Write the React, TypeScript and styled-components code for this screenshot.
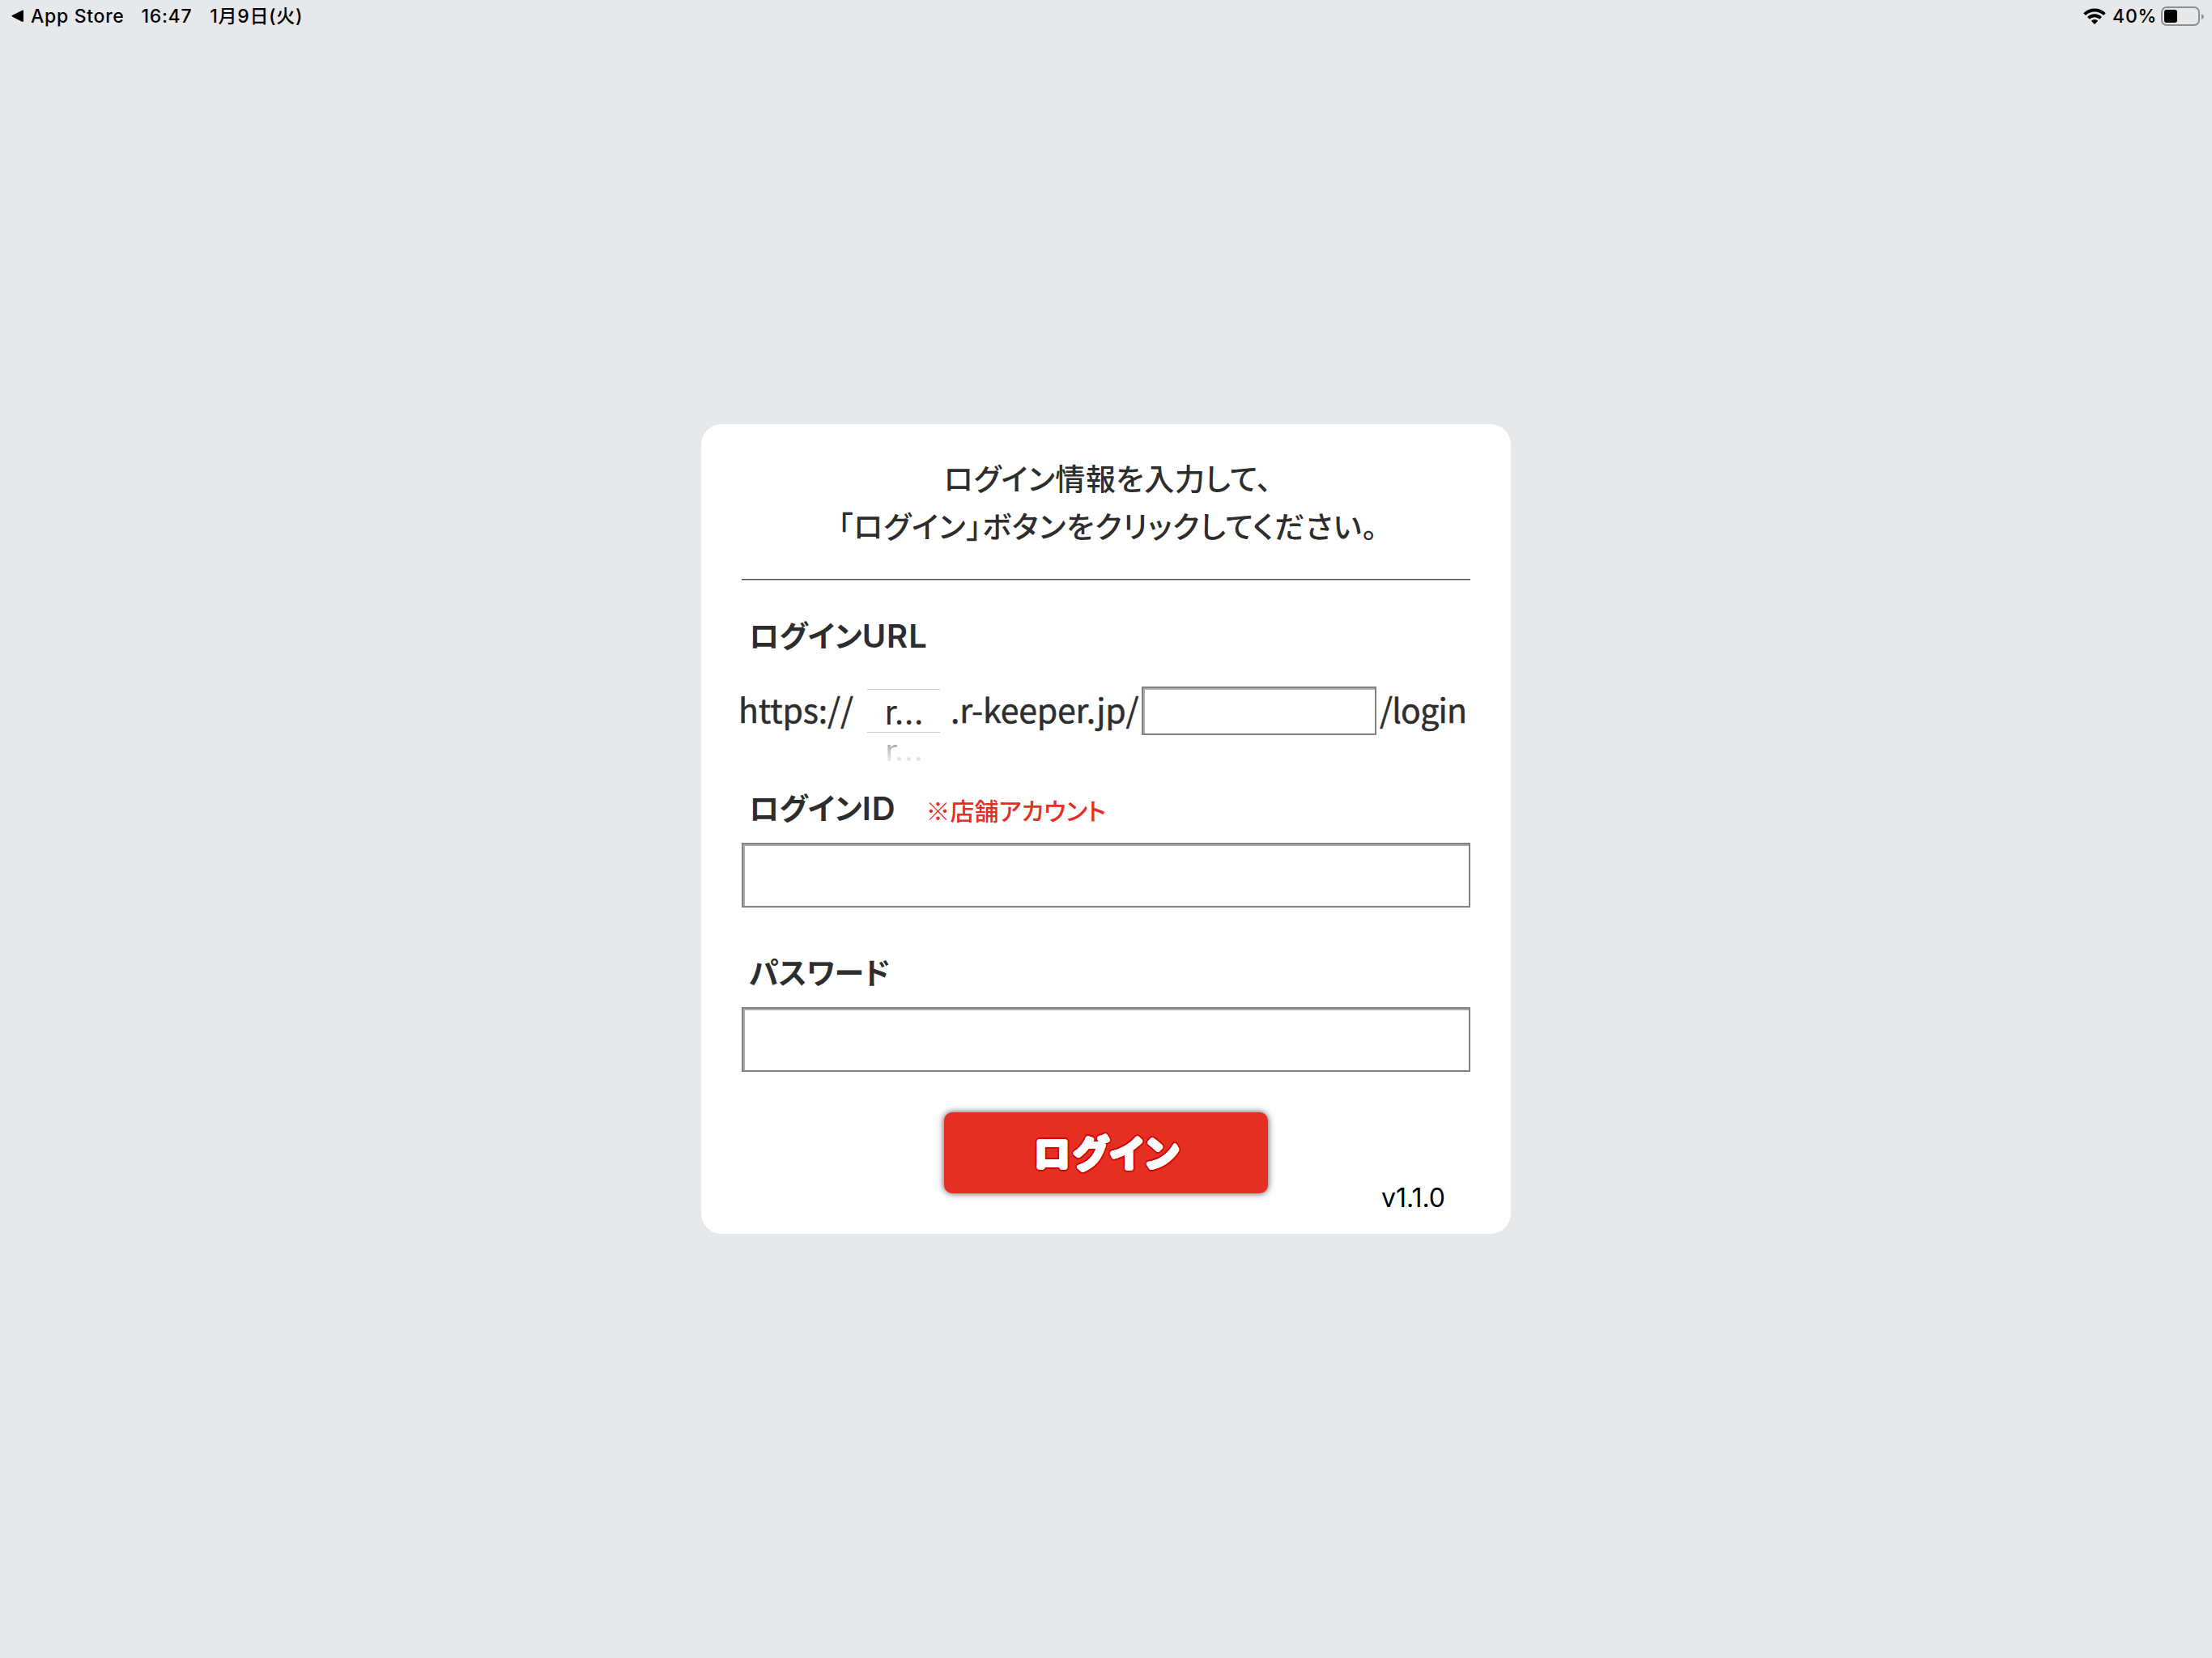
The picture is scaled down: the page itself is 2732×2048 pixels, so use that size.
import styled, { createGlobalStyle } from 'styled-components'
import React from 'react'

// 文字の縁取り(円状にシャドウを並べる)
const ring = (radius: number, color: string, steps = 16) =>
  Array.from({ length: steps }, (_, i) => {
    const angle = (Math.PI * 2 * i) / steps
    return `${(Math.cos(angle) * radius).toFixed(2)}px ${(Math.sin(angle) * radius).toFixed(2)}px ${color}`
  }).join(', ')

const GlobalStyle = createGlobalStyle`
  * {
    box-sizing: border-box;
  }

  body {
    margin: 0;
    background: #e7e8ea;
  }
`

const App: React.FC = () => {
  return (
    <Screen>
      <GlobalStyle />
      <StatusBar>
        <StatusGroup>
          <BackArrow viewBox='0 0 15 16'>
            <path d='M13.6 0.7 L1 7 Q0 7.8 1 8.6 L13.6 15 Q15 15.4 15 14 V1.7 Q15 0.3 13.6 0.7 Z' />
          </BackArrow>
          <StatusText $left={9}>App Store</StatusText>
          <StatusText $left={21}>16:47</StatusText>
          <StatusText $left={22}>1月9日(火)</StatusText>
        </StatusGroup>
        <StatusGroup>
          <WifiIcon viewBox='0 0 28 20'>
            <path d='M1.6 7.6 A17.5 17.5 0 0 1 26.4 7.6' />
            <path d='M6.4 12.4 A10.8 10.8 0 0 1 21.6 12.4' />
            <path className='dot' d='M14 20 L9.8 15.8 A6 6 0 0 1 18.2 15.8 Z' />
          </WifiIcon>
          <StatusText $left={8}>40%</StatusText>
          <Battery>
            <BatteryLevel />
          </Battery>
          <BatteryCap viewBox='0 0 4 9'>
            <path d='M0 0 Q4 1.5 4 4.5 Q4 7.5 0 9 Z' />
          </BatteryCap>
        </StatusGroup>
      </StatusBar>

      <Card>
        <Heading>
          <HeadingLine $spacing={0.6}>ログイン情報を入力して、</HeadingLine>
          <HeadingLine $spacing={1.05}>「ログイン」ボタンをクリックしてください。</HeadingLine>
        </Heading>
        <Divider />

        <Label $top={45}>
          ログイン<Latin>URL</Latin>
        </Label>
        <UrlRow>
          <UrlText $width={159} $spacing={-0.15}>
            https://
          </UrlText>
          <Picker>
            <PickerItem>r…</PickerItem>
            <PickerNext>r…</PickerNext>
          </Picker>
          <UrlText $width={249} $left={13} $spacing={-0.15}>
            .r-keeper.jp/
          </UrlText>
          <UrlInput type='text' />
          <UrlText $width={116} $left={4} $spacing={-0.8}>
            /login
          </UrlText>
        </UrlRow>

        <Label $top={67}>
          ログイン<Latin>ID</Latin>
          <Notice>※店舗アカウント</Notice>
        </Label>
        <Input type='text' />

        <Label $top={57}>パスワード</Label>
        <Input type='password' />

        <LoginButton type='button'>ログイン</LoginButton>
        <Version>v1.1.0</Version>
      </Card>
    </Screen>
  )
}

const Screen = styled.div`
  height: 2048px;
  display: flex;
  flex-direction: column;
  background: #e7e8ea;
  font-family: 'Noto Sans CJK JP', sans-serif;
`

const StatusBar = styled.header`
  display: flex;
  justify-content: space-between;
  height: 40px;
  padding: 0 10px 0 14px;
`

const StatusGroup = styled.div`
  display: flex;
  align-items: center;
  height: 40px;
`

const StatusText = styled.span<{ $left: number }>`
  margin-left: ${({ $left }) => $left}px;
  font-family: Inter, 'Noto Sans CJK JP', sans-serif;
  font-size: 23px;
  font-weight: 500;
  line-height: 40px;
  letter-spacing: 0.7px;
  color: #000;
  white-space: nowrap;
`

const BackArrow = styled.svg`
  width: 15px;
  height: 16px;
`

const WifiIcon = styled.svg`
  width: 28px;
  height: 20px;

  path {
    fill: none;
    stroke: #000;
    stroke-width: 4;
  }

  .dot {
    fill: #000;
    stroke: none;
  }
`

const Battery = styled.div`
  width: 48px;
  height: 24px;
  margin-left: 5px;
  padding: 2px;
  border: 2px solid #8e8f90;
  border-radius: 7px;
`

const BatteryLevel = styled.div`
  width: 16px;
  height: 16px;
  border-radius: 3px;
  background: #000;
`

const BatteryCap = styled.svg`
  width: 3px;
  height: 9px;
  margin-left: 2px;
  fill: #8e8f90;
`

const Card = styled.main`
  display: flex;
  flex-direction: column;
  width: 1000px;
  height: 1000px;
  margin: 484px auto 0;
  padding: 37px 50px 0;
  border-radius: 25px;
  background: #fff;
  color: #2d2d2d;
`

const Heading = styled.h1`
  margin: 0;
  padding-left: 5px;
  font-size: 37px;
  font-weight: 500;
  line-height: 59px;
  text-align: center;
  white-space: nowrap;
  font-feature-settings: 'palt';
`

const HeadingLine = styled.span<{ $spacing: number }>`
  display: block;
  letter-spacing: ${({ $spacing }) => $spacing}px;
`

const Divider = styled.hr`
  width: 100%;
  height: 2px;
  margin: 36px 0 0;
  border: 0;
  background: linear-gradient(#505050 50%, #a8a8a8 50%);
`

const Label = styled.div<{ $top: number }>`
  height: 44px;
  margin-top: ${({ $top }) => $top}px;
  padding-left: 9px;
  font-size: 37px;
  font-weight: 700;
  line-height: 44px;
  white-space: nowrap;
  font-feature-settings: 'palt';
`

const Latin = styled.span`
  font-family: Inter, sans-serif;
  font-size: 40px;
  font-weight: 600;
  line-height: 0;
  letter-spacing: 1px;
`

const Notice = styled.span`
  margin-left: 37px;
  color: #e62f23;
  font-size: 30px;
  font-weight: 500;
  line-height: 0;
`

const UrlRow = styled.div`
  display: flex;
  align-items: center;
  height: 60px;
  margin: 42px 0 0 -4px;
`

const UrlText = styled.span<{ $width: number; $spacing: number; $left?: number }>`
  flex: none;
  width: ${({ $width }) => $width}px;
  padding: 0 0 6px ${({ $left = 0 }) => $left}px;
  font-size: 41px;
  line-height: 54px;
  letter-spacing: ${({ $spacing }) => $spacing}px;
  white-space: nowrap;
  -webkit-text-stroke: 0.5px #2d2d2d;
`

const Picker = styled.div`
  flex: none;
  align-self: flex-start;
  width: 90px;
  height: 57px;
  margin-top: 3px;
  font-family: Inter, sans-serif;
  text-align: center;
`

const PickerItem = styled.div`
  height: 54px;
  border: solid #c8c8c8;
  border-width: 1px 0;
  font-size: 42px;
  line-height: 56px;
  letter-spacing: -1.5px;
`

const PickerNext = styled.div`
  height: 42px;
  font-size: 41px;
  line-height: 44px;
  letter-spacing: -1.5px;
  transform: scaleY(0.86);
  background: linear-gradient(#a0a0a0 25%, #e8e8e8 85%);
  background-clip: text;
  color: transparent;
`

const Input = styled.input`
  flex: none;
  width: 100%;
  height: 80px;
  margin: 22px 0 0;
  padding: 0 12px;
  border: 2px solid #828282;
  border-radius: 0;
  outline: none;
  background: #fff;
  box-shadow: inset 2px 2px 0 #aaa;
  font-size: 36px;
`

const UrlInput = styled(Input)`
  width: 290px;
  height: 60px;
  margin: 0;
`

const LoginButton = styled.button`
  align-self: center;
  flex: none;
  width: 400px;
  height: 100px;
  margin-top: 50px;
  padding: 0 0 3px 3px;
  border: 0;
  border-radius: 10px;
  background: #e62f23;
  box-shadow: 0 0 8px rgba(0, 0, 0, 0.7);
  color: #fff;
  font-family: 'Noto Sans CJK JP', sans-serif;
  font-size: 45px;
  font-weight: 700;
  line-height: 96px;
  letter-spacing: 3px;
  font-feature-settings: 'palt';
  text-shadow: ${ring(1.8, '#fff')}, ${ring(3.8, '#d60604')};
`

const Version = styled.div`
  align-self: flex-end;
  margin-right: 31px;
  margin-top: -14px;
  font-family: Inter, sans-serif;
  font-size: 32px;
  line-height: 40px;
  color: #000;
`

export default App
